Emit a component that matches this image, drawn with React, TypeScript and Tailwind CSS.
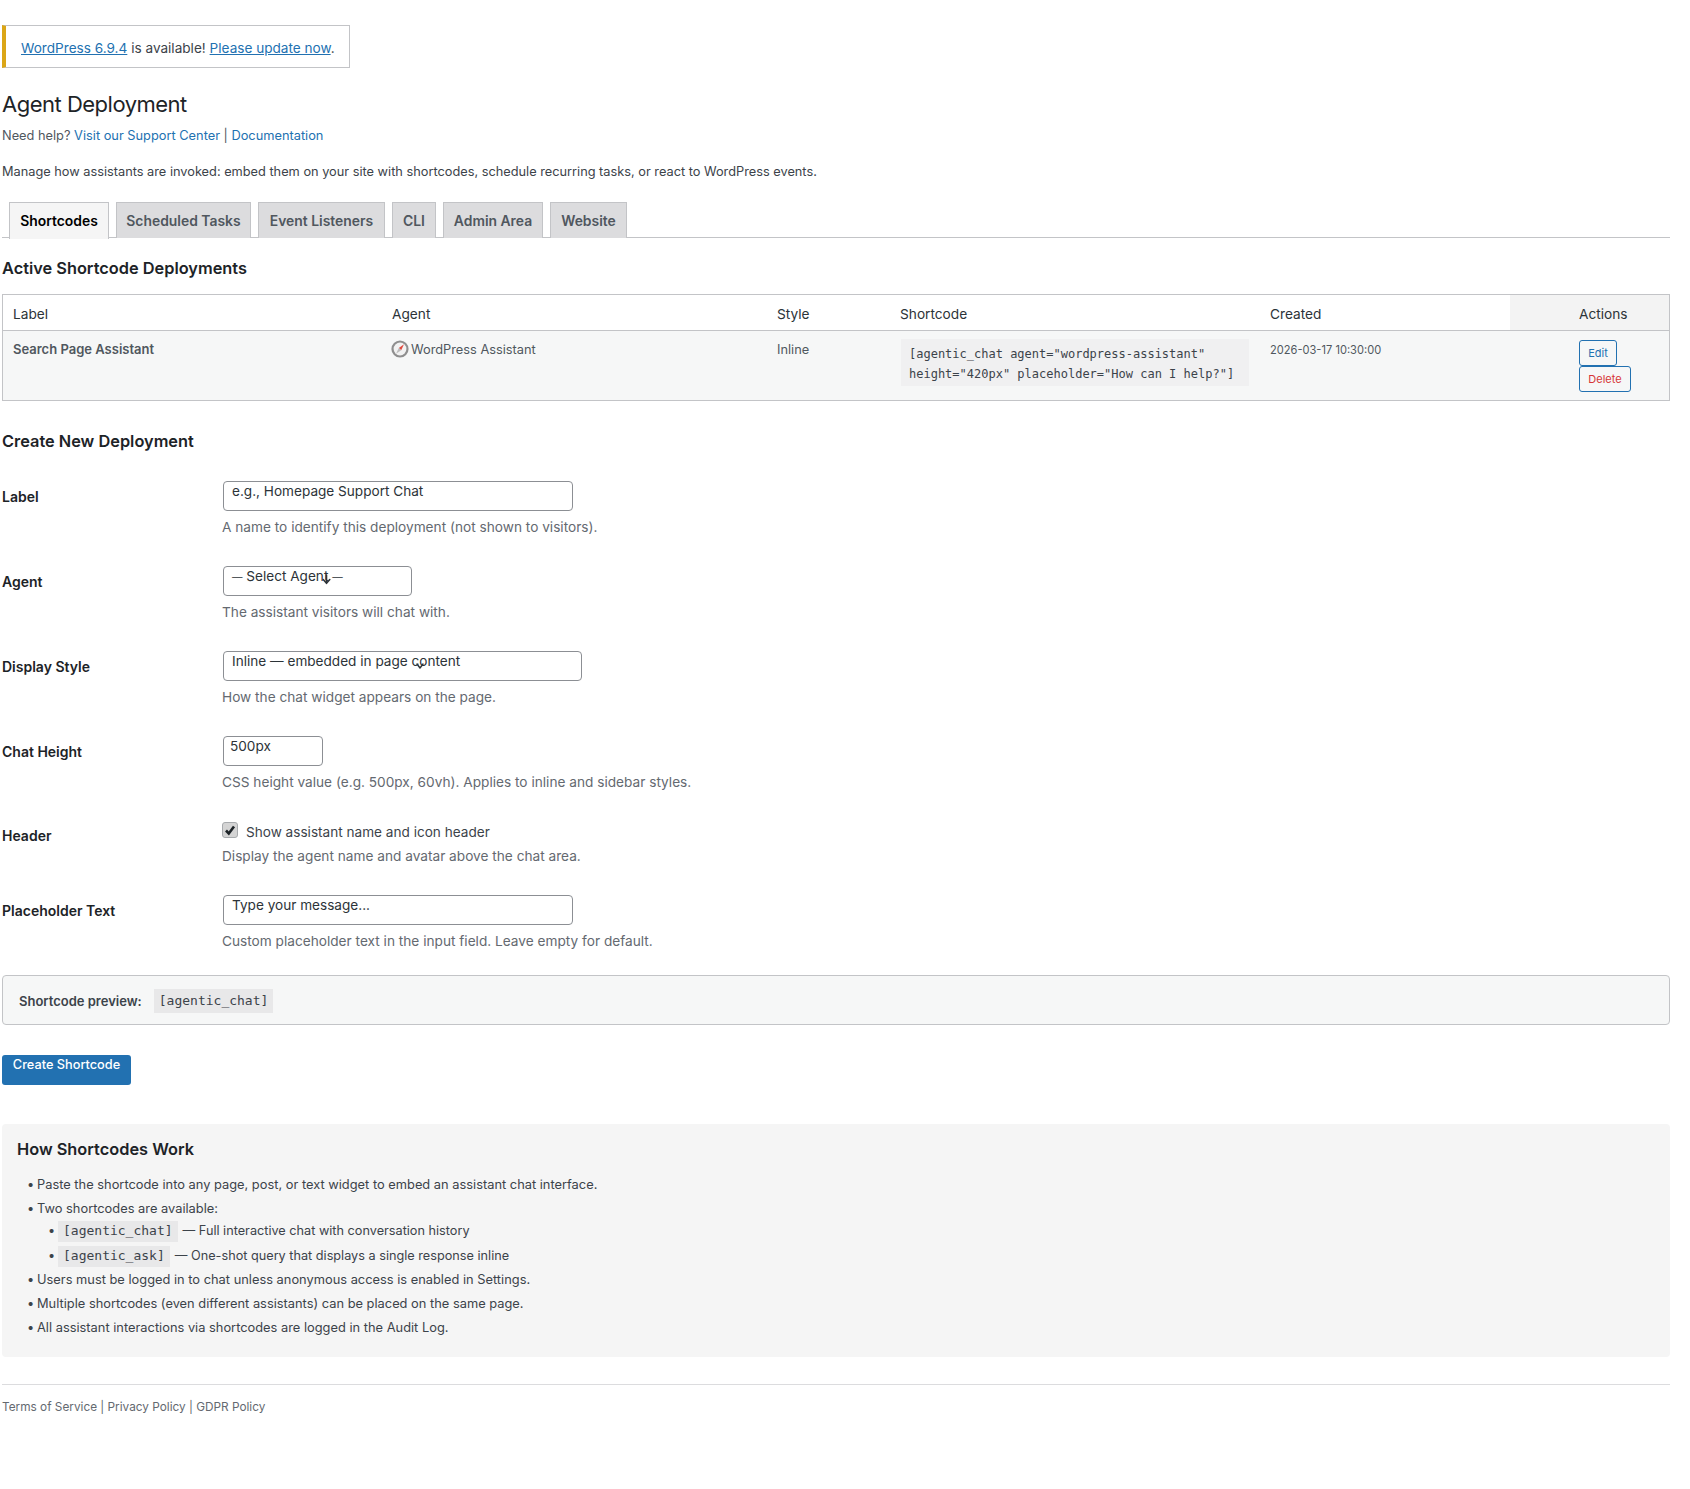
import React from 'react';

const tabs = [
  { name: 'Shortcodes', width: 'w-[100px]', active: true },
  { name: 'Scheduled Tasks', width: 'w-[135px]' },
  { name: 'Event Listeners', width: 'w-[127px]' },
  { name: 'CLI', width: 'w-[44px]' },
  { name: 'Admin Area', width: 'w-[100px]' },
  { name: 'Website', width: 'w-[77px]' },
];

const Chevron: React.FC<{ className: string }> = ({ className }) => (
  <svg viewBox="0 0 10 10" className={className} fill="none" stroke="#2c3338" strokeWidth="1.4" strokeLinecap="round" strokeLinejoin="round">
    <path d="M2 5l3 3.5L8 5" />
    <path d="M5 1v7" />
  </svg>
);

const CompassIcon = () => (
  <svg viewBox="0 0 18 18" className="w-[18px] h-[18px] shrink-0">
    <circle cx="9" cy="9" r="8.6" fill="#8f8f8f" />
    <circle cx="9" cy="9" r="6.4" fill="#f2f2f2" />
    <path d="M13 4.2L10.2 10.2 7.8 8z" fill="#df4a3f" />
    <path d="M5 13.8L10.2 10.2 7.8 8z" fill="#bdbdbd" />
  </svg>
);

const FormRow: React.FC<{
  label: string;
  labelClass: string;
  rowClass: string;
  children: React.ReactNode;
}> = ({ label, labelClass, rowClass, children }) => (
  <div className={`flex ${rowClass}`}>
    <div className={`w-[220px] shrink-0 text-[14px] leading-5 font-semibold text-[#1d2327] ${labelClass}`}>{label}</div>
    <div className="flex-1">{children}</div>
  </div>
);

const Desc: React.FC<{ children: React.ReactNode; className?: string }> = ({ children, className = 'mt-[6px]' }) => (
  <p className={`text-[13.67px] leading-5 text-[#646970] ${className}`}>{children}</p>
);

const fieldClass =
  'relative ml-px h-[30px] bg-white border border-[#8c8f94] rounded-[4px] text-[13.6px] leading-[18px] text-[#2c3338] pl-2 box-border';

export default function App() {
  return (
    <div className="min-h-[1489px] bg-white pl-[2px] pr-[20px] text-[12.8px] leading-5 text-[#3c434a] font-['Inter','Noto_Sans',sans-serif]">
      {/* update nag */}
      <div className="pt-[25px]">
        <div className="w-[348px] h-[43px] border border-[#c3c4c7] border-l-4 border-l-[#dba617] pl-[15px] pt-[2px] flex items-center text-[13.6px] text-[#3c434a]">
          <span>
            <a className="text-[#2271b1] underline">WordPress 6.9.4</a> is available!{' '}
            <a className="text-[#2271b1] underline">Please update now</a>.
          </span>
        </div>
      </div>

      <h1 className="mt-[21px] text-[22px] leading-[30px] tracking-[-0.5px] font-normal text-[#1d2327]">Agent Deployment</h1>
      <p className="mt-[7px] text-[12.8px] leading-5 text-[#50575e]">
        Need help? <a className="text-[#2271b1]">Visit our Support Center</a> | <a className="text-[#2271b1]">Documentation</a>
      </p>
      <p className="mt-[16px] text-[12.77px] leading-5 text-[#3c434a]">
        Manage how assistants are invoked: embed them on your site with shortcodes, schedule recurring tasks, or react to WordPress events.
      </p>

      {/* tabs */}
      <div className="mt-[20px] flex h-[36px] border-b border-[#c3c4c7] pl-[7px] gap-[7px]">
        {tabs.map(tab => (
          <div
            key={tab.name}
            className={`${tab.width} h-[36px] border border-[#c3c4c7] border-b-0 text-center text-[13.9px] leading-[36px] font-semibold ${
              tab.active ? 'bg-[#f5f5f5] text-[#000000] h-[37px]' : 'bg-[#dcdcde] text-[#50575e]'
            }`}
          >
            {tab.name}
          </div>
        ))}
      </div>

      <h2 className="mt-[18px] text-[16.35px] leading-6 font-semibold text-[#1d2327]">Active Shortcode Deployments</h2>

      {/* deployments table */}
      <div className="mt-[14px] border border-[#c3c4c7]">
        <div className="flex h-[36px] border-b border-[#c3c4c7] text-[13.7px] leading-[38px] text-[#2c3338]">
          <div className="w-[379px] pl-[10px]">Label</div>
          <div className="w-[385px] pl-[10px]">Agent</div>
          <div className="w-[123px] pl-[10px]">Style</div>
          <div className="w-[370px] pl-[10px]">Shortcode</div>
          <div className="w-[250px] pl-[10px]">Created</div>
          <div className="flex-1 pl-[69px] bg-[#f3f3f3]">Actions</div>
        </div>
        <div className="flex h-[69px] bg-[#f6f7f7] text-[12.8px] text-[#50575e]">
          <div className="w-[379px] pl-[10px] pt-[8px] text-[13px] font-semibold text-[#50575e]">Search Page Assistant</div>
          <div className="w-[385px] pl-[9px] pt-[9px] flex gap-[2px] items-start">
            <CompassIcon />
            <span>WordPress Assistant</span>
          </div>
          <div className="w-[123px] pl-[10px] pt-[9px]">Inline</div>
          <div className="w-[370px] pl-[11px] pt-[8px]">
            <code className="block w-[348px] h-[47px] bg-[#f0f0f1] px-2 pt-[5px] font-['DejaVu_Sans_Mono',monospace] text-[12px] leading-5 text-[#3c434a] whitespace-pre">
              {'[agentic_chat agent="wordpress-assistant"\nheight="420px" placeholder="How can I help?"]'}
            </code>
          </div>
          <div className="w-[250px] pl-[10px] pt-[9px] text-[11.1px] text-[#50575e]">2026-03-17 10:30:00</div>
          <div className="flex-1 pl-[69px] pt-[9px] flex flex-col items-start">
            <button className="h-[26px] w-[38px] border border-[#2271b1] rounded-[3px] bg-[#f6f7f7] text-[11px] leading-6 text-[#2271b1]">Edit</button>
            <button className="h-[26px] w-[52px] border border-[#2271b1] rounded-[3px] bg-[#f6f7f7] text-[11px] leading-6 text-[#d63638]">Delete</button>
          </div>
        </div>
      </div>

      <h2 className="mt-[28px] text-[16.35px] leading-6 font-semibold text-[#1d2327]">Create New Deployment</h2>

      {/* form */}
      <div className="mt-[28px]">
        <FormRow label="Label" labelClass="pt-[6px]" rowClass="h-[85px]">
          <div className={`${fieldClass} w-[350px]`}>e.g., Homepage Support Chat</div>
          <Desc>A name to identify this deployment (not shown to visitors).</Desc>
        </FormRow>
        <FormRow label="Agent" labelClass="pt-[6px]" rowClass="h-[85px]">
          <div className={`${fieldClass} w-[189px]`}>
            <span className="text-[10.5px]">—</span> Select Agent <span className="text-[10.5px]">—</span>
            <Chevron className="absolute left-[97px] top-[7px] w-[11px] h-[11px]" />
          </div>
          <Desc>The assistant visitors will chat with.</Desc>
        </FormRow>
        <FormRow label="Display Style" labelClass="pt-[6px]" rowClass="h-[85px]">
          <div className={`${fieldClass} w-[359px]`}>
            Inline — embedded in page content
            <svg viewBox="0 0 10 10" className="absolute left-[191px] top-[8px] w-[10px] h-[10px]" fill="none" stroke="#2c3338" strokeWidth="1.4" strokeLinecap="round" strokeLinejoin="round">
              <path d="M2 4l3 4 3-4" />
            </svg>
          </div>
          <Desc>How the chat widget appears on the page.</Desc>
        </FormRow>
        <FormRow label="Chat Height" labelClass="pt-[6px]" rowClass="h-[86px]">
          <div className={`${fieldClass} w-[100px] !pl-[6px]`}>500px</div>
          <Desc>CSS height value (e.g. 500px, 60vh). Applies to inline and sidebar styles.</Desc>
        </FormRow>
        <FormRow label="Header" labelClass="pt-[4px]" rowClass="h-[73px]">
          <label className="flex items-start h-[20px]">
            <span className="w-4 h-4 bg-[#d4d4d4] border border-[#a7aaad] rounded-[3px] flex items-center justify-center">
              <svg viewBox="0 0 12 12" className="w-3 h-3" fill="none" stroke="#1d2327" strokeWidth="2.6">
                <path d="M2 6.5l2.8 3L10 2.5" />
              </svg>
            </span>
            <span className="ml-[8px] text-[13.6px] leading-5 text-[#3c434a]">Show assistant name and icon header</span>
          </label>
          <Desc className="mt-[4px]">Display the agent name and avatar above the chat area.</Desc>
        </FormRow>
        <FormRow label="Placeholder Text" labelClass="pt-[6px]" rowClass="h-[80px]">
          <div className={`${fieldClass} w-[350px]`}>Type your message...</div>
          <Desc>Custom placeholder text in the input field. Leave empty for default.</Desc>
        </FormRow>
      </div>

      {/* preview */}
      <div className="h-[50px] flex items-center pl-4 bg-[#f6f7f7] border border-[#c3c4c7] rounded-[4px]">
        <span className="pt-[2px] text-[13px] font-semibold text-[#3c434a]">Shortcode preview:</span>
        <code className="ml-3 mt-[2px] h-[24px] px-[5px] bg-[#e8e8e9] font-['DejaVu_Sans_Mono',monospace] text-[13px] leading-6 text-[#3c434a]">[agentic_chat]</code>
      </div>

      <button className="block mt-[30px] w-[129px] h-[30px] bg-[#2271b1] rounded-[3px] text-[12.75px] leading-5 pb-3 font-medium text-white">Create Shortcode</button>

      {/* how it works */}
      <div className="mt-[39px] h-[233px] bg-[#f5f5f5] rounded-[4px] pl-[15px] pt-[13px]">
        <h3 className="text-[16.35px] leading-6 font-semibold text-[#1d2327]">How Shortcodes Work</h3>
        <ul className="mt-[14px] text-[12.85px] leading-5 text-[#3c434a]">
          <li className="flex h-[24px]"><span className="w-[20px] pl-[10px]">•</span>Paste the shortcode into any page, post, or text widget to embed an assistant chat interface.</li>
          <li className="flex h-[19px]"><span className="w-[20px] pl-[10px]">•</span>Two shortcodes are available:</li>
          <li className="flex h-[26px] items-center pl-[31px] text-[12.7px]">
            <span className="w-[10px]">•</span>
            <code className="h-[21px] px-[5px] bg-[#e8e8e9] font-['DejaVu_Sans_Mono',monospace] text-[13px] leading-[19px]">[agentic_chat]</code>
            <span className="ml-[5px]">— Full interactive chat with conversation history</span>
          </li>
          <li className="flex h-[24px] items-center pl-[31px] text-[12.7px]">
            <span className="w-[10px]">•</span>
            <code className="h-[21px] px-[5px] bg-[#e8e8e9] font-['DejaVu_Sans_Mono',monospace] text-[13px] leading-[19px]">[agentic_ask]</code>
            <span className="ml-[5px]">— One-shot query that displays a single response inline</span>
          </li>
          <li className="flex h-[24px] items-center"><span className="w-[20px] pl-[10px]">•</span>Users must be logged in to chat unless anonymous access is enabled in Settings.</li>
          <li className="flex h-[24px] items-center"><span className="w-[20px] pl-[10px]">•</span>Multiple shortcodes (even different assistants) can be placed on the same page.</li>
          <li className="flex h-[24px] items-center"><span className="w-[20px] pl-[10px]">•</span>All assistant interactions via shortcodes are logged in the Audit Log.</li>
        </ul>
      </div>

      <div className="mt-[27px] border-t border-[#dcdcde] pt-[12px] text-[11.8px] leading-5 text-[#646970]">
        Terms of Service | Privacy Policy | GDPR Policy
      </div>
    </div>
  );
}
